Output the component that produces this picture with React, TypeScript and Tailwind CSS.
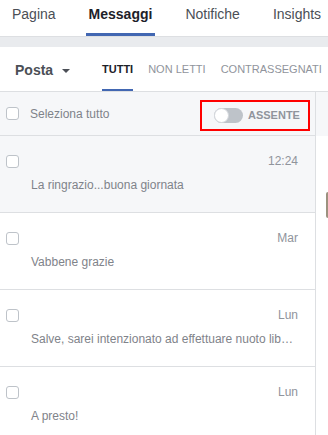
import React from 'react';

interface Thread {
  id: number;
  time: string;
  snippet: string;
  unread?: boolean;
}

const threads: Thread[] = [
  { id: 1, time: '12:24', snippet: 'La ringrazio...buona giornata', unread: true },
  { id: 2, time: 'Mar', snippet: 'Vabbene grazie' },
  { id: 3, time: 'Lun', snippet: 'Salve, sarei intenzionato ad effettuare nuoto lib…' },
  { id: 4, time: 'Lun', snippet: 'A presto!' },
];

function Checkbox() {
  return <div className="w-[13px] h-[13px] rounded-[3px] border border-[#bec3c9] bg-white shrink-0" />;
}

function ThreadRow({ thread }: { thread: Thread }) {
  return (
    <div className={`h-[77px] border-b border-[#dddfe2] pl-[6px] pr-[17px] pt-[18px] ${thread.unread ? 'bg-[#f6f7f9]' : 'bg-white'}`}>
      <div className="flex items-center justify-between h-[15px]">
        <Checkbox />
        <span className="text-[12px] leading-[15px] text-[#90949c]">{thread.time}</span>
      </div>
      <p className="mt-[8px] ml-[25px] text-[12px] leading-[16px] text-[#7f838a] whitespace-nowrap">{thread.snippet}</p>
    </div>
  );
}

export default function App() {
  const tabs = ['Pagina', 'Messaggi', 'Notifiche', 'Insights'];

  return (
    <div className="w-[328px] h-[435px] overflow-hidden bg-white font-['Liberation_Sans',Arial,sans-serif]">
      {/* top nav */}
      <nav className="h-[37px] flex items-stretch gap-[27px] pl-[9px] border-b border-[#dddfe2] whitespace-nowrap">
        {tabs.map(t => (
          <div
            key={t}
            className={`px-[3px] flex items-center pb-[5px] text-[14px] border-b-[3px] ${t === 'Messaggi' ? 'font-bold text-[#1d2129] border-[#4267b2]' : 'text-[#4b4f56] border-transparent'}`}
          >
            {t}
          </div>
        ))}
      </nav>

      <div className="h-[10px] bg-[#e9ebee]" />

      {/* filter bar */}
      <div className="h-[45px] flex items-stretch border-b border-[#dddfe2] whitespace-nowrap">
        <div className="flex items-center pl-[15px] w-[102px] pt-[2px]">
          <span className="text-[14px] font-bold text-[#4b4f56]">Posta</span>
          <svg width="8" height="4" viewBox="0 0 8 4" className="ml-[9px] mt-[1px]">
            <path d="M0 0h8L4 4z" fill="#4b4f56" />
          </svg>
        </div>
        <div className="flex items-stretch gap-[15px] text-[11px]">
          <div className="flex items-center font-bold text-[#1d2129] border-b-2 border-[#4267b2] pt-[2px]">TUTTI</div>
          <div className="flex items-center text-[#90949c] border-b-2 border-transparent pt-[2px]">NON LETTI</div>
          <div className="flex items-center text-[#90949c] border-b-2 border-transparent pt-[2px]">CONTRASSEGNATI</div>
        </div>
      </div>

      <div className="flex">
        {/* list */}
        <div className="w-[316px] border-r border-[#dddfe2] shrink-0">
          <div className="h-[44px] bg-[#f6f7f9] border-b border-[#dddfe2] flex items-center pl-[6px] pr-[5px]">
            <Checkbox />
            <span className="ml-[11px] text-[12px] text-[#7f838a]">Seleziona tutto</span>
            <div className="ml-auto mt-[3px] w-[110px] h-[31px] border-2 border-[#ff0000] flex items-center pl-[12px]">
              <div className="relative w-[29px] h-[15px] rounded-full bg-[#bec3c9]">
                <div className="absolute left-0 top-0 w-[15px] h-[15px] rounded-full bg-white border border-[#d4d7dc]" />
              </div>
              <span className="ml-[5px] text-[11px] font-bold text-[#90949c]">ASSENTE</span>
            </div>
          </div>
          {threads.map(t => (
            <ThreadRow key={t.id} thread={t} />
          ))}
        </div>

        {/* conversation panel (cut off) */}
        <div className="flex-1">
          <div className="h-[44px] bg-[#f6f7f9]" />
          <div className="mt-[56px] ml-[10px] w-[4px] h-[26px] rounded-l-[2px] bg-[#9c927f]" />
        </div>
      </div>
    </div>
  );
}
